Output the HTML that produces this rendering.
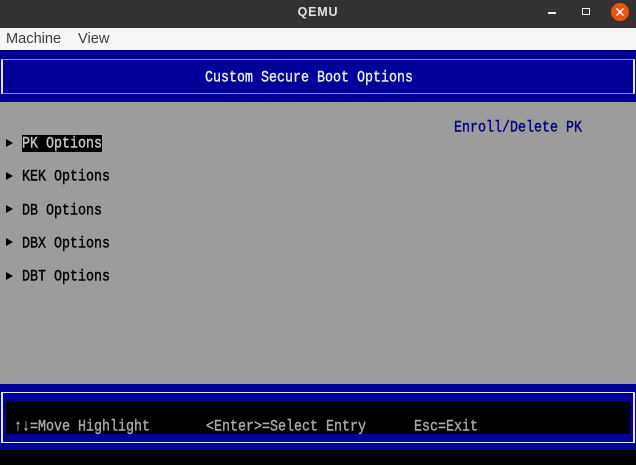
<!DOCTYPE html>
<html><head><meta charset="utf-8"><style>
html,body{margin:0;padding:0;background:#000}
body{width:636px;height:465px;position:relative;overflow:hidden;font-family:"Liberation Sans",sans-serif}
div{position:absolute}
.t{font-family:"Liberation Mono",monospace;font-size:13.33px;line-height:16px;height:16px;white-space:pre;transform:translateY(2px) scaleY(1.2);transform-origin:0 50%;-webkit-text-stroke:.35px currentColor}
.d{color:#000}.b{color:#00007c}.g{color:#a8a8a8}
.a{width:0;height:0;border-left:7px solid #000;border-top:4.5px solid transparent;border-bottom:4.5px solid transparent;left:6px}
</style></head><body>
<div style="left:0;top:0;width:636px;height:28px;background:#333231"></div>
<div style="left:0;top:4px;width:636px;text-align:center;color:#e0e0e0;font-weight:bold;font-size:12.5px;line-height:16px;letter-spacing:.8px">QEMU</div>
<div style="left:548px;top:12px;width:8px;height:2px;background:#eee"></div>
<div style="left:582px;top:8px;width:6px;height:5px;border:1px solid #eee;border-width:1.5px"></div>
<div style="left:611px;top:3px;width:18px;height:18px;border-radius:50%;background:#ee5316"></div>
<svg style="position:absolute;left:611px;top:3px" width="18" height="18"><path d="M5.5 5.5L12.5 12.5M12.5 5.5L5.5 12.5" stroke="#fff" stroke-width="1.5"/></svg>

<div style="left:0;top:28px;width:636px;height:22px;background:#f6f6f5"></div>
<div style="left:6px;top:31px;color:#3c3c3c;font-size:14.6px;line-height:16px">Machine</div>
<div style="left:78px;top:31px;color:#3c3c3c;font-size:14.6px;line-height:16px">View</div>

<div style="left:0;top:50px;width:636px;height:2px;background:#000060"></div>
<div style="left:0;top:52px;width:636px;height:50px;background:#000098"></div>
<div style="left:1px;top:59px;width:630px;height:33px;border:1px solid #8a8adc;border-left:2px solid #e4e4f4;border-right:2px solid #e4e4f4"></div>
<div class="t" style="left:205px;top:69px;color:#e8e8e8">Custom Secure Boot Options</div>

<div style="left:0;top:102px;width:636px;height:282px;background:#9c9c9c"></div>
<div class="t b" style="left:454px;top:119px">Enroll/Delete PK</div>

<div style="left:22px;top:135px;width:80px;height:17px;background:#000"></div>
<div class="a" style="top:139px"></div>
<div class="t" style="left:22px;top:135px;color:#c8c8c8">PK Options</div>
<div class="a" style="top:172px"></div>
<div class="t d" style="left:22px;top:168px">KEK Options</div>
<div class="a" style="top:205px"></div>
<div class="t d" style="left:22px;top:202px">DB Options</div>
<div class="a" style="top:238px"></div>
<div class="t d" style="left:22px;top:235px">DBX Options</div>
<div class="a" style="top:272px"></div>
<div class="t d" style="left:22px;top:268px">DBT Options</div>

<div style="left:0;top:384px;width:636px;height:66px;background:#000098"></div>
<div style="left:1px;top:392px;width:630px;height:49px;border:1px solid #e4e4f4;border-width:1px 2px"></div>
<div style="left:6px;top:401px;width:624px;height:33px;background:#000"></div>
<div class="t g" style="left:14px;top:418px">↑↓=Move Highlight</div>
<div class="t g" style="left:206px;top:418px">&lt;Enter&gt;=Select Entry</div>
<div class="t g" style="left:414px;top:418px">Esc=Exit</div>
</body></html>
